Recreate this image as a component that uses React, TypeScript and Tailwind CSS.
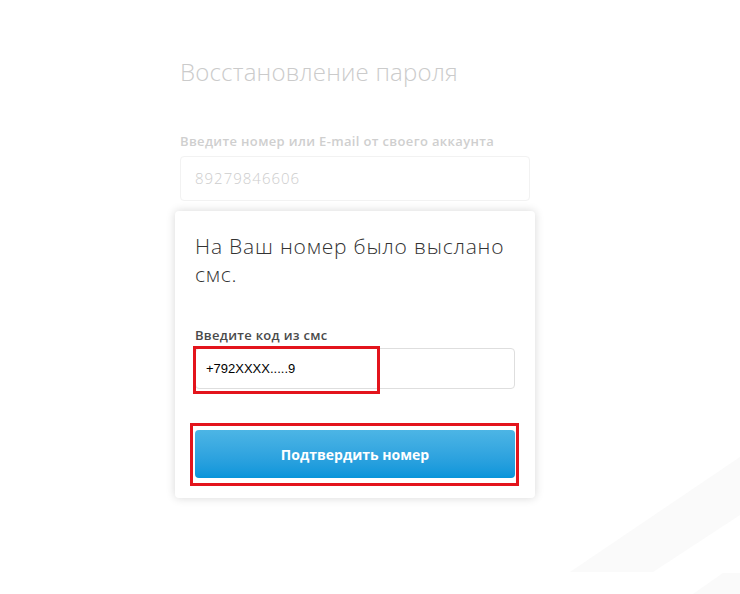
import React from 'react';

const font = { fontFamily: '"Open Sans", "Noto Sans", sans-serif' };

export default function App() {
  return (
    <div className="relative w-[740px] h-[594px] overflow-hidden bg-white" style={font}>
      {/* faint background stripes */}
      <svg className="absolute inset-0 pointer-events-none" width="740" height="594" viewBox="0 0 740 594">
        <polygon points="740,457 570,572 653,572 740,515" fill="#fafafa" />
        <polygon points="723,573 740,573 740,594 693,594" fill="#fafafa" />
      </svg>

      <div className="relative w-[350px] ml-[180px] pt-[56px]">
        <h1 className="text-[24px] font-light leading-[32px] text-[#cbcbcb] tracking-[0.2px]">
          Восстановление пароля
        </h1>

        <div className="mt-[44px] text-[13px] font-semibold leading-[18px] tracking-[0.35px] text-[#cfcfcf]">
          Введите номер или E-mail от своего аккаунта
        </div>
        <div className="mt-[6px] h-[45px] rounded-[4px] border border-[#f2f2f2] flex items-center pl-[14px] text-[15px] font-light tracking-[1px] text-[#cdcdcd]">
          89279846606
        </div>

        {/* sms card */}
        <div className="mt-[10px] -mx-[5px] rounded-[4px] bg-white px-[20px] pt-[21px] pb-[20px] shadow-[0_0_10px_rgba(0,0,0,0.16)]">
          <p className="text-[21px] font-light leading-[28px] tracking-[0.8px] text-[#333333]">
            На Ваш номер было выслано смс.
          </p>

          <div className="mt-[39px] text-[13px] font-semibold leading-[16px] tracking-[0.3px] text-[#4a4a4a]">
            Введите код из смс
          </div>
          <div className="relative mt-[5px] h-[41px] rounded-[4px] border border-[#dedede] flex items-center pl-[10px]">
            <span className="text-[13px] text-black" style={{ fontFamily: '"Liberation Sans", Arial, sans-serif' }}>
              +792XXXX.....9
            </span>
            <div className="absolute -left-[3px] -top-[3px] w-[187px] h-[48px] border-[3px] border-[#e3141c]" />
          </div>

          <div className="relative mt-[41px]">
            <button className="w-full h-[48px] rounded-[4px] bg-gradient-to-b from-[#4cb5e5] to-[#0595da] text-[14px] font-bold text-white">
              Подтвердить номер
            </button>
            <div className="absolute -left-[5px] -right-[4px] -top-[7px] -bottom-[8px] border-[3px] border-[#e3141c]" />
          </div>
        </div>
      </div>
    </div>
  );
}
